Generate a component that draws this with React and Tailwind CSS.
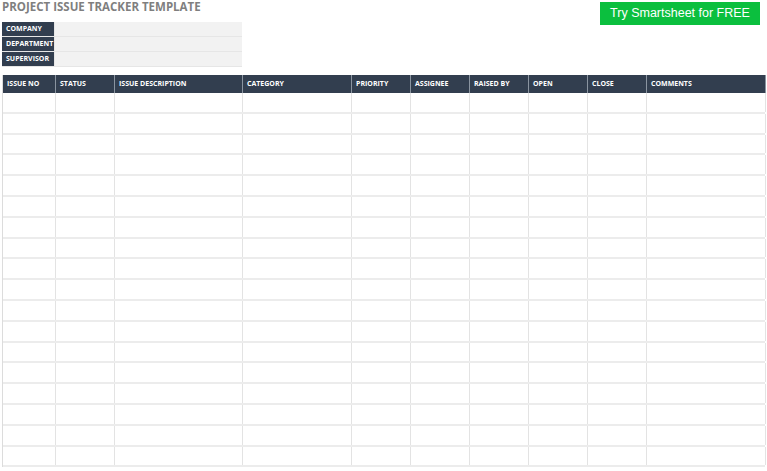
export default function App() {
  const cols = [
    ["ISSUE NO", 53], ["STATUS", 59], ["ISSUE DESCRIPTION", 128], ["CATEGORY", 109], ["PRIORITY", 59],
    ["ASSIGNEE", 59], ["RAISED BY", 59], ["OPEN", 59], ["CLOSE", 59], ["COMMENTS", 119],
  ];
  const rows = Array.from({ length: 18 });
  return (
    <div className="w-[767px] h-[471px] bg-white overflow-hidden relative" style={{ fontFamily: "'Open Sans','Liberation Sans',sans-serif" }}>
      <div className="flex justify-between pl-[2px] pr-[7px]">
        <div>
          <div className="text-[11.5px] font-bold text-[#7f7f7f] leading-[14px] h-[22px]">PROJECT ISSUE TRACKER TEMPLATE</div>
          {["COMPANY", "DEPARTMENT", "SUPERVISOR"].map((l) => (
            <div key={l} className="flex h-[15px] border-b border-[#e6e6e6]">
              <div className="w-[53px] bg-[#323e4f] text-white text-[7px] font-bold flex items-center pl-[4px] border-r border-[#e6e6e6]">{l}</div>
              <div className="w-[187px] bg-[#f2f2f2]" />
            </div>
          ))}
        </div>
        <div className="mt-[2px] w-[160px] h-[23px] bg-[#0bbf3e] text-white text-[12.5px] flex items-center justify-center" style={{ fontFamily: "'Liberation Sans',Arial,sans-serif" }}>Try Smartsheet for FREE</div>
      </div>
      <div className="mt-[8px] ml-[2px] w-[763px] border-l border-[#dcdcdc]">
        <div className="flex h-[18px] bg-[#323e4f]">
          {cols.map(([n, w]) => (
            <div key={n} style={{ width: w }} className="shrink-0 border-r border-[#8a94a0] text-white text-[7px] font-bold flex items-center pl-[4px]">{n}</div>
          ))}
        </div>
        {rows.map((_, i) => (
          <div key={i} className="flex h-[20.8px] border-b-2 border-[#ececec]">
            {cols.map(([n, w]) => (
              <div key={n} style={{ width: w }} className="shrink-0 border-r border-[#e3e3e3]" />
            ))}
          </div>
        ))}
      </div>
    </div>
  );
}
